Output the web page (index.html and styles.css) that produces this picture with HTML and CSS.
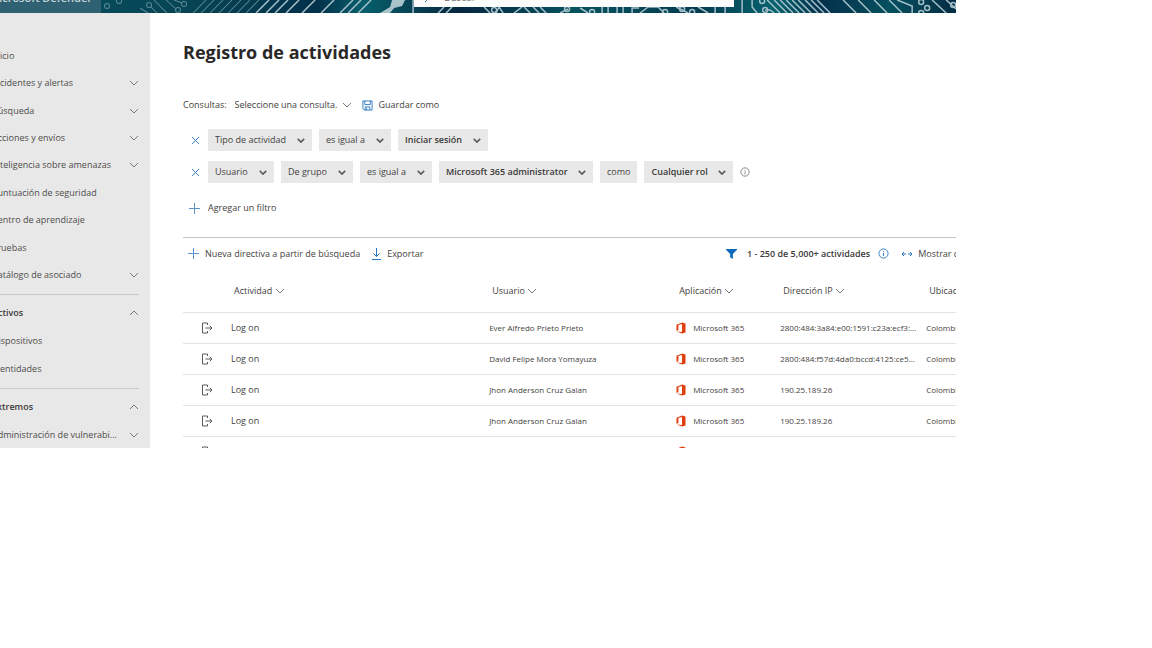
FILE: index.html
```html
<!DOCTYPE html>
<html lang="es">
<head>
<meta charset="utf-8">
<title>Registro de actividades - Microsoft Defender</title>
<link rel="stylesheet" href="styles.css">
</head>
<body>
<svg class="sprite" aria-hidden="true">
  <symbol id="down" viewBox="0 0 10 6"><path d="M1 1l4 4 4-4"/></symbol>
  <symbol id="up" viewBox="0 0 10 6"><path d="M1 5l4-4 4 4"/></symbol>
  <symbol id="close" viewBox="0 0 10 10"><path d="M1 1l8 8M9 1l-8 8"/></symbol>
  <symbol id="plus" viewBox="0 0 11 11"><path d="M5.500 0v11M0 5.500h11"/></symbol>
  <symbol id="info" viewBox="0 0 12 12"><circle cx="6" cy="6" r="5"/><path d="M6 5.200v3.600M6 3.200v1"/></symbol>
  <symbol id="logon" viewBox="0 0 12 12"><path d="M6.500 3V1H1.500v10h5V9M4.500 6h6.500M8.800 3.800L11 6 8.800 8.200"/></symbol>
  <symbol id="office" viewBox="0 0 10 12"><path d="M.5 2.700L6.200.5 9.500 1.500v9L6.200 11.500.5 9.400l5.500.7V2L2.400 2.900v5.200L.5 9z"/></symbol>
</svg>
<div class="app">
  <header class="topbar">
    <svg class="circuit" viewBox="0 0 956 13" preserveAspectRatio="xMinYMin slice" aria-hidden="true">
      <defs>
        <linearGradient id="sea" x1="0" x2="1">
          <stop offset="0" stop-color="#075062"/><stop offset=".2" stop-color="#064453"/><stop offset=".33" stop-color="#03304a"/><stop offset=".38" stop-color="#075f6b"/><stop offset=".48" stop-color="#06263f"/><stop offset=".6" stop-color="#06525f"/><stop offset=".73" stop-color="#043c50"/><stop offset=".81" stop-color="#06636e"/><stop offset=".86" stop-color="#04304b"/><stop offset=".93" stop-color="#06505f"/><stop offset="1" stop-color="#042c43"/>
        </linearGradient>
      </defs>
      <rect width="956" height="13" fill="url(#sea)"/>
      <g class="dim">
        <circle cx="107" cy="6" r="2.500"/><circle cx="119" cy="1" r="2.500"/><circle cx="149" cy="5" r="2.500"/><circle cx="184" cy="4" r="2.500"/><circle cx="178" cy="10" r="2.500"/>
        <path d="M151 7l6 6M154 0l13 13M166 0l10 9M174 0l8 3M140 8l8 5"/>
        <path d="M193 13l13-13M201 13l13-13M210 13l13-13M219 13l13-13M228 13l13-13M237 13l13-13M246 13l13-13"/>
      </g>
      <g class="lit">
        <path d="M256 13l13-13M266 13l13-13M275 13l13-13M286 13l13-13M302 13l13-13M321 13l13-13M340 13l13-13M348 13l13-13M358 13l13-13"/>
        <path d="M438 13l6-6M446 13l6-6M484 7l6 6M496 13l3-6 4 6M514 13l8-6M524 7l6 6M533 7l6 6M540 7l6 6M560 13l8-4M580 8l8 5M602 7v6M608 7v6M617 7v6M623 7v6M632 13V8h7M640 13l8-6h10l6 6M676 7l12 6M698 7l10 6M715 7v6M725 7v6"/>
        <circle cx="494" cy="10" r="2.500"/><circle cx="567" cy="9" r="2.500"/><circle cx="592" cy="12" r="2.500"/><circle cx="665" cy="12" r="2.500"/><circle cx="682" cy="9" r="2.500"/><circle cx="692" cy="12" r="2.500"/>
        <path d="M742 0v13M752 0v7l5 6M765 10h5l4 3M767 0l13 13M774 0l13 13M780 0l13 13M786 0l13 13M792 0l13 13M798 0l13 13M805 0l13 13M811 0l13 13M817 0l13 13M843 0l13 13M858 0l13 13M874 0l13 13M889 0l13 13M897 0l15 6v7M932 0l14 13M946 0l10 9"/>
        <circle cx="765" cy="10" r="2.500"/><circle cx="762" cy="1" r="2.500"/><circle cx="921" cy="2" r="2.500"/><circle cx="927" cy="8" r="2.500"/><circle cx="921" cy="13" r="2.500"/><circle cx="953" cy="5" r="2.500"/>
        <path d="M413 0v13"/>
      </g>
      <path d="M380 13l10-6 2-7h13l-3 6-8 2-4 5z" fill="#a9c3cb"/>
    </svg>
    <a class="brand" href="#">Microsoft Defender</a>
    <label class="search">
      <svg class="lens" viewBox="0 0 12 12" aria-hidden="true"><circle cx="7.500" cy="4.500" r="3.500"/><path d="M5 7l-4 4"/></svg>
      <input type="search" placeholder="Buscar" aria-label="Buscar">
    </label>
  </header>

  <div class="body">
    <nav class="side" aria-label="Principal">
      <ul class="group">
        <li><a href="#">Inicio</a></li>
        <li><a href="#">Incidentes y alertas<svg class="chev"><use href="#down"/></svg></a></li>
        <li><a href="#">Búsqueda<svg class="chev"><use href="#down"/></svg></a></li>
        <li><a href="#">Acciones y envíos<svg class="chev"><use href="#down"/></svg></a></li>
        <li><a href="#">Inteligencia sobre amenazas<svg class="chev"><use href="#down"/></svg></a></li>
        <li><a href="#">Puntuación de seguridad</a></li>
        <li><a href="#">Centro de aprendizaje</a></li>
        <li><a href="#">Pruebas</a></li>
        <li><a href="#">Catálogo de asociado<svg class="chev"><use href="#down"/></svg></a></li>
      </ul>
      <ul class="group">
        <li><a class="head" href="#">Activos<svg class="chev"><use href="#up"/></svg></a></li>
        <li><a href="#">Dispositivos</a></li>
        <li><a href="#">Identidades</a></li>
      </ul>
      <ul class="group">
        <li><a class="head" href="#">Extremos<svg class="chev"><use href="#up"/></svg></a></li>
        <li><a href="#">Administración de vulnerabi...<svg class="chev"><use href="#down"/></svg></a></li>
      </ul>
    </nav>

    <main class="main">
      <h1>Registro de actividades</h1>

      <div class="queries">
        <label for="query">Consultas:</label>
        <span class="pick plain"><select id="query"><option>Seleccione una consulta.</option></select><svg class="chev"><use href="#down"/></svg></span>
        <button class="tool save" type="button">
          <svg class="disk" viewBox="0 0 12 12" aria-hidden="true"><path d="M1 1h10v10H2.500L1 9.500zM3 1v4h6V1M3.500 11V7.500h5V11M5 9v2"/></svg>Guardar como</button>
      </div>

      <div class="filters">
        <div class="filter">
          <button class="remove" type="button" aria-label="Quitar filtro"><svg><use href="#close"/></svg></button>
          <span class="pick"><select aria-label="Campo"><option>Tipo de actividad</option></select><svg class="chev"><use href="#down"/></svg></span>
          <span class="pick"><select aria-label="Operador"><option>es igual a</option></select><svg class="chev"><use href="#down"/></svg></span>
          <span class="pick strong"><select aria-label="Valor"><option>Iniciar sesión</option></select><svg class="chev"><use href="#down"/></svg></span>
        </div>
        <div class="filter">
          <button class="remove" type="button" aria-label="Quitar filtro"><svg><use href="#close"/></svg></button>
          <span class="pick"><select aria-label="Campo"><option>Usuario</option></select><svg class="chev"><use href="#down"/></svg></span>
          <span class="pick"><select aria-label="Origen"><option>De grupo</option></select><svg class="chev"><use href="#down"/></svg></span>
          <span class="pick"><select aria-label="Operador"><option>es igual a</option></select><svg class="chev"><use href="#down"/></svg></span>
          <span class="pick strong"><select aria-label="Grupo"><option>Microsoft 365 administrator</option></select><svg class="chev"><use href="#down"/></svg></span>
          <span class="word">como</span>
          <span class="pick strong"><select aria-label="Rol"><option>Cualquier rol</option></select><svg class="chev"><use href="#down"/></svg></span>
          <svg class="hint"><use href="#info"/></svg>
        </div>
      </div>
      <button class="tool add" type="button"><svg class="plus"><use href="#plus"/></svg>Agregar un filtro</button>

      <div class="actions">
        <button class="tool" type="button"><svg class="plus"><use href="#plus"/></svg>Nueva directiva a partir de búsqueda</button>
        <button class="tool" type="button"><svg class="export" viewBox="0 0 9 12" aria-hidden="true"><path d="M4.500 0V8.500M1.500 5.500l3 3 3-3M0 11.500h9"/></svg>Exportar</button>
        <span class="count"><svg class="funnel" viewBox="0 0 12 12" aria-hidden="true"><path d="M0 1h12v1L7.500 6.500V12L4.500 10V6.500L0 2z"/></svg>1 - 250 de 5,000+ actividades<svg class="about"><use href="#info"/></svg></span>
        <button class="tool" type="button"><svg class="wide" viewBox="0 0 12 8" aria-hidden="true"><path d="M1 4h4M7 4h4M3 2L1 4l2 2M9 2l2 2-2 2"/></svg>Mostrar detalles</button>
      </div>

      <table class="log">
        <colgroup><col class="c-icon"><col><col class="c-user"><col class="c-app"><col class="c-ip"><col class="c-place"></colgroup>
        <thead>
          <tr><th></th><th>Actividad <svg class="chev"><use href="#down"/></svg></th><th>Usuario <svg class="chev"><use href="#down"/></svg></th><th>Aplicación <svg class="chev"><use href="#down"/></svg></th><th>Dirección IP <svg class="chev"><use href="#down"/></svg></th><th>Ubicación</th></tr>
        </thead>
        <tbody>
          <tr><td><svg class="logon"><use href="#logon"/></svg></td><td class="what">Log on</td><td>Ever Alfredo Prieto Prieto</td><td><span class="product"><svg><use href="#office"/></svg>Microsoft 365</span></td><td>2800:484:3a84:e00:1591:c23a:ecf3:...</td><td>Colombia</td></tr>
          <tr><td><svg class="logon"><use href="#logon"/></svg></td><td class="what">Log on</td><td>David Felipe Mora Yomayuza</td><td><span class="product"><svg><use href="#office"/></svg>Microsoft 365</span></td><td>2800:484:f57d:4da0:bccd:4125:ce5...</td><td>Colombia</td></tr>
          <tr><td><svg class="logon"><use href="#logon"/></svg></td><td class="what">Log on</td><td>Jhon Anderson Cruz Galan</td><td><span class="product"><svg><use href="#office"/></svg>Microsoft 365</span></td><td>190.25.189.26</td><td>Colombia</td></tr>
          <tr><td><svg class="logon"><use href="#logon"/></svg></td><td class="what">Log on</td><td>Jhon Anderson Cruz Galan</td><td><span class="product"><svg><use href="#office"/></svg>Microsoft 365</span></td><td>190.25.189.26</td><td>Colombia</td></tr>
          <tr><td><svg class="logon"><use href="#logon"/></svg></td><td class="what">Log on</td><td>Jhon Anderson Cruz Galan</td><td><span class="product"><svg><use href="#office"/></svg>Microsoft 365</span></td><td>190.25.189.26</td><td>Colombia</td></tr>
        </tbody>
      </table>
    </main>
  </div>
</div>
</body>
</html>
```
FILE: styles.css
```css
* { box-sizing: border-box; }

body {
  margin: 0;
  background: #fff;
  color: #444240;
  font: 9px/14px "Open Sans", "Noto Sans", sans-serif;
}

button, select, input { font: inherit; color: inherit; }
button { border: 0; padding: 0; background: none; }
a { color: inherit; text-decoration: none; }
ul { list-style: none; margin: 0; padding: 0; }
svg { flex: none; fill: none; stroke: currentColor; stroke-width: 1; }

.sprite { display: none; }
.chev { width: 10px; height: 6px; stroke: #7a7876; }

.app {
  display: flex;
  flex-direction: column;
  width: 83%;
  max-height: 448px;
  overflow: hidden;
}

/* Top bar */
.topbar {
  position: relative;
  flex: none;
  display: flex;
  align-items: flex-end;
  height: 13px;
  overflow: hidden;
}
.circuit { position: absolute; inset: 0; width: 100%; height: 100%; stroke: none; }
.circuit .dim { fill: none; stroke: #5b8896; stroke-width: 1; }
.circuit .lit { fill: none; stroke: #a3bfc9; stroke-width: 1.5; }
.brand {
  position: relative;
  display: flex;
  justify-content: flex-end;
  width: 101px;
  padding: 0 9px 6px 0;
  background: #2f6172;
  color: #c5d4da;
  font-size: 11px;
  font-weight: 600;
  line-height: 18px;
  white-space: nowrap;
}
.search {
  position: relative;
  display: flex;
  align-items: center;
  gap: 8px;
  width: 320px;
  height: 20px;
  margin: 0 0 6px 313px;
  padding-left: 10px;
  background: #fcfcfc;
}
.search input { flex: 1; min-width: 0; border: 0; padding: 0; background: none; outline: 0; font-size: 10px; }
.lens { width: 12px; height: 12px; color: #4a7f9c; }

.body { display: flex; min-height: 0; }

/* Side navigation */
.side {
  flex: none;
  width: 150px;
  padding: 29px 11px 0 0;
  background: #e8e8e8;
  color: #4e4c4a;
}
.group { display: grid; grid-auto-rows: 1fr; }
.group:first-child { height: 247px; }
.group + .group { margin-top: 5px; border-top: 1px solid #c9c9c9; padding-top: 4px; }
.group li { min-height: 27px; display: grid; }
.group + .group li { min-height: 28px; }
.group a {
  display: flex;
  align-items: center;
  justify-content: space-between;
  margin-left: -8px;
  white-space: nowrap;
}
.group .head { font-weight: 600; color: #3b3a39; }

/* Main area */
.main { flex: 1; min-width: 0; padding: 23px 0 0 33px; overflow: hidden; }
h1 { margin: 0; font-size: 18px; line-height: 32px; font-weight: 700; color: #292827; }

.queries { display: flex; align-items: center; gap: 8px; margin-top: 29px; height: 16px; }
.pick { display: grid; align-items: center; background: #e8e8e8; }
.pick > * { grid-area: 1 / 1; }
.pick select {
  appearance: none;
  border: 0;
  height: 22px;
  padding: 0 26px 0 7px;
  background: none;
}
.pick .chev { justify-self: end; margin-right: 7px; width: 8px; height: 5px; stroke: #5c5a58; stroke-width: 2; pointer-events: none; }
.pick.plain { background: none; }
.pick.plain select { padding: 0 14px 0 0; height: 16px; }
.pick.plain .chev { margin-right: 0; width: 10px; height: 6px; stroke: #7a7876; stroke-width: 1; }
.strong { font-weight: 600; color: #3b3a39; }
.pick.strong select { padding-right: 25px; }

.tool { display: inline-flex; align-items: center; white-space: nowrap; gap: 6px; }
.save { margin-left: 2px; }
.disk { width: 11px; height: 11px; color: #2b78c0; }

.filters { display: grid; gap: 10px; margin-top: 16px; }
.filter { display: flex; align-items: center; gap: 7px; white-space: nowrap; }
.remove { width: 18px; padding-left: 7px; line-height: 0; }
.remove svg { width: 9px; height: 9px; stroke: #2478d0; }
.word { background: #e8e8e8; padding: 4px 7px; }
.hint { width: 10px; height: 10px; color: #7a7876; }
.add { display: flex; gap: 8px; margin: 18px 0 0 6px; }
.plus { width: 11px; height: 11px; stroke: #5b93cc; }

.actions {
  display: flex;
  align-items: center;
  gap: 12px;
  height: 32px;
  margin-top: 22px;
  border-top: 1px solid #c4c4c4;
  padding-left: 5px;
  white-space: nowrap;
}
.actions .tool:last-child { width: 55px; gap: 5px; }
.export { width: 9px; height: 12px; color: #2b78c0; }
.count { display: flex; align-items: center; gap: 8px; margin-left: auto; font-weight: 600; color: #3b3a39; }
.funnel { width: 11px; height: 11px; margin-right: 2px; fill: #0f6cbd; stroke: none; }
.about { width: 11px; height: 11px; color: #2b78c0; }
.wide { width: 12px; height: 8px; color: #2b78c0; }

/* Activity table */
.log {
  width: calc(100% + 80px);
  table-layout: fixed;
  border-collapse: collapse;
  font-size: 8px;
}
.c-icon { width: 48px; }
.c-user { width: 187px; }
.c-app { width: 104px; }
.c-ip { width: 146px; }
.c-place { width: 110px; }
.log th {
  height: 43px;
  padding: 2px 0 0 3px;
  font-size: 9px;
  font-weight: 400;
  text-align: left;
}
.log td { height: 31px; padding: 0; border-top: 1px solid #e3e3e3; white-space: nowrap; }
.log td:first-child { padding-left: 18px; line-height: 0; }
.log .what { font-size: 9px; }
.logon { width: 12px; height: 12px; stroke: #5c5a58; }
.product { display: flex; align-items: center; gap: 7px; }
.product svg { width: 10px; height: 12px; fill: #e03e0c; stroke: none; }
```
